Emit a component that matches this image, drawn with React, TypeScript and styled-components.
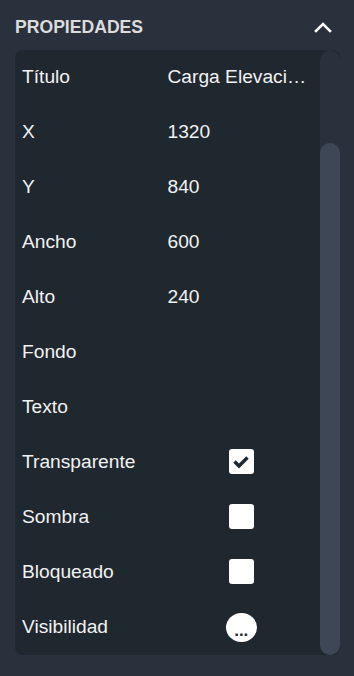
import React from 'react'
import styled, { createGlobalStyle } from 'styled-components'

const GlobalStyle = createGlobalStyle`
  html, body {
    margin: 0;
    padding: 0;
    background: #29313c;
  }
  body {
    font-family: "Liberation Sans", Arial, sans-serif;
  }
`

const Sidebar = styled.div`
  width: 354px;
  height: 676px;
  box-sizing: border-box;
  padding: 0 14px 0 15px;
  background: #29313c;
  display: flex;
  flex-direction: column;
`

const Header = styled.div`
  height: 50px;
  display: flex;
  align-items: center;
  justify-content: space-between;
  padding-top: 4px;
  box-sizing: border-box;
`

const Title = styled.span`
  font-size: 17.6px;
  font-weight: 700;
  color: #dcdcdc;
`

const CollapseButton = styled.button`
  background: transparent;
  border: none;
  padding: 0;
  margin-right: 7px;
  width: 20px;
  height: 20px;
  display: flex;
  align-items: center;
  justify-content: center;
  cursor: pointer;
`

const Panel = styled.div`
  height: 605px;
  background: #1f272f;
  border-radius: 8px;
  display: flex;
  overflow: hidden;
`

const Rows = styled.div`
  flex: 1;
  display: flex;
  flex-direction: column;
  padding: 0 7px;
  min-width: 0;
`

const Row = styled.div`
  height: 55px;
  box-sizing: border-box;
  padding-bottom: 2px;
  flex-shrink: 0;
  display: grid;
  grid-template-columns: 1fr 1fr;
  align-items: center;
  color: #f2f2f2;
  font-size: 19.2px;
`

const Label = styled.span`
  white-space: nowrap;
`

const Value = styled.span`
  white-space: nowrap;
  overflow: hidden;
  text-overflow: ellipsis;
`

const Control = styled.div`
  display: flex;
  justify-content: center;
  align-items: center;
  padding-left: 2px;
`

const Check = styled.div`
  width: 25px;
  height: 25px;
  border-radius: 3px;
  background: #ffffff;
  display: flex;
  align-items: center;
  justify-content: center;
`

const DotsButton = styled.button`
  width: 31px;
  height: 29px;
  border-radius: 50%;
  border: none;
  background: #ffffff;
  color: #1f272f;
  font-family: "Liberation Sans", Arial, sans-serif;
  font-size: 17px;
  font-weight: 700;
  line-height: 1;
  padding: 6px 0 0;
  display: flex;
  align-items: center;
  justify-content: center;
  margin-top: 2px;
`

const Track = styled.div`
  width: 20px;
  flex-shrink: 0;
  background: #29313c;
  border-radius: 10px;
  padding-top: 93px;
  display: flex;
  flex-direction: column;
`

const Thumb = styled.div`
  flex: 1;
  background: #3d4755;
  border-radius: 10px;
`

type Prop = { label: string; value?: string; check?: boolean; dots?: boolean }

const props: Prop[] = [
  { label: 'Título', value: 'Carga Elevación Norte' },
  { label: 'X', value: '1320' },
  { label: 'Y', value: '840' },
  { label: 'Ancho', value: '600' },
  { label: 'Alto', value: '240' },
  { label: 'Fondo', value: '' },
  { label: 'Texto', value: '' },
  { label: 'Transparente', check: true },
  { label: 'Sombra', check: false },
  { label: 'Bloqueado', check: false },
  { label: 'Visibilidad', dots: true },
]

export default function App() {
  return (
    <>
      <GlobalStyle />
      <Sidebar>
        <Header>
          <Title>PROPIEDADES</Title>
          <CollapseButton>
            <svg width="18" height="12" viewBox="0 0 18 12">
              <polyline points="2,10 9,3 16,10" fill="none" stroke="#ffffff" strokeWidth="2.6" strokeLinecap="square" />
            </svg>
          </CollapseButton>
        </Header>
        <Panel>
          <Rows>
            {props.map((p) => (
              <Row key={p.label}>
                <Label>{p.label}</Label>
                {p.check !== undefined ? (
                  <Control>
                    <Check>
                      {p.check && (
                        <svg width="18" height="14" viewBox="0 0 18 14">
                          <polyline points="2.5,6.5 7,11 15.5,2.5" fill="none" stroke="#1f272f" strokeWidth="3.4" />
                        </svg>
                      )}
                    </Check>
                  </Control>
                ) : p.dots ? (
                  <Control>
                    <DotsButton>...</DotsButton>
                  </Control>
                ) : (
                  <Value>{p.value}</Value>
                )}
              </Row>
            ))}
          </Rows>
          <Track>
            <Thumb />
          </Track>
        </Panel>
      </Sidebar>
    </>
  )
}
